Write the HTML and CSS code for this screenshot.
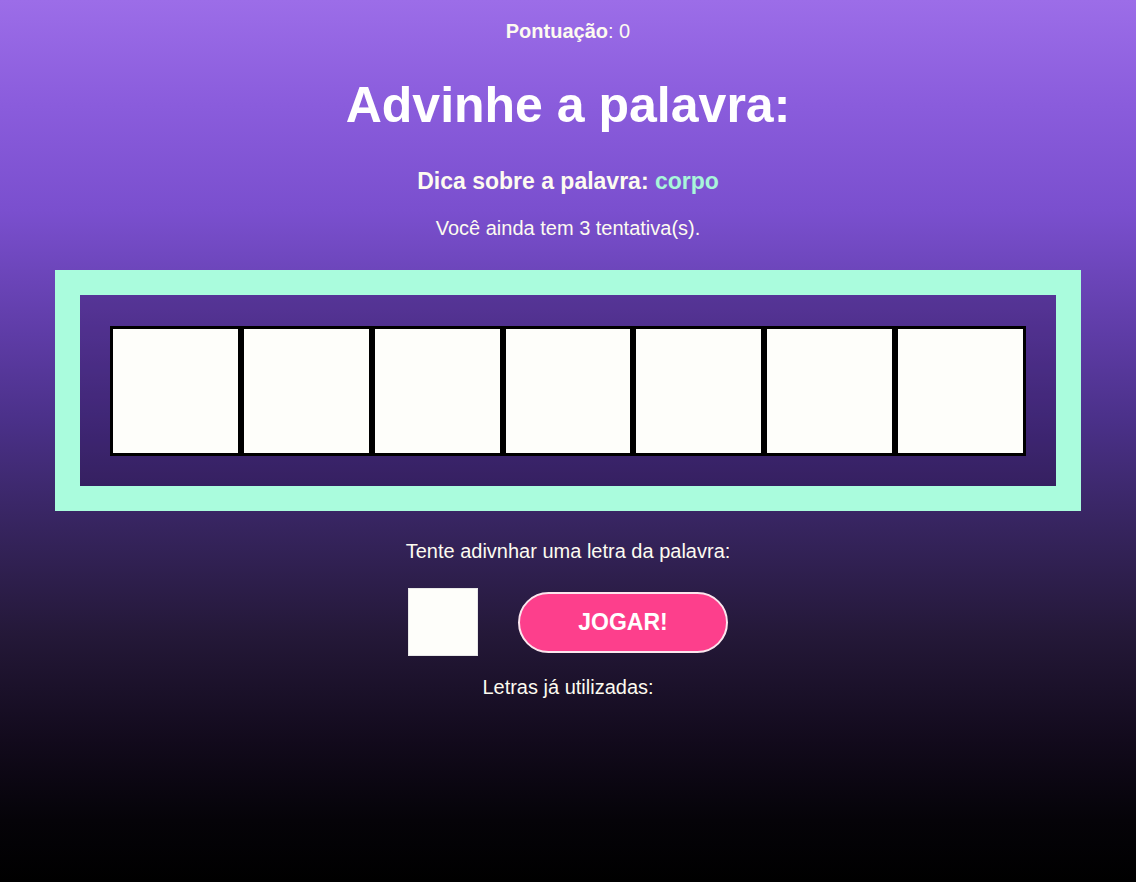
FILE: index.html
```html
<!DOCTYPE html>
<html lang="pt-BR">
<head>
<meta charset="utf-8">
<title>Advinhe a palavra</title>
<link rel="stylesheet" href="styles.css">
</head>
<body>
  <main class="game">
    <p class="score"><strong>Pontuação</strong>: 0</p>
    <h1 class="title">Advinhe a palavra:</h1>
    <h2 class="hint">Dica sobre a palavra: <span class="hint-word">corpo</span></h2>
    <p class="tries">Você ainda tem 3 tentativa(s).</p>

    <section class="board">
      <div class="board-inner">
        <div class="tiles">
          <div class="tile"></div>
          <div class="tile"></div>
          <div class="tile"></div>
          <div class="tile"></div>
          <div class="tile"></div>
          <div class="tile"></div>
          <div class="tile"></div>
        </div>
      </div>
    </section>

    <p class="prompt">Tente adivnhar uma letra da palavra:</p>
    <div class="play-row">
      <input class="letter-input" type="text" maxlength="1" aria-label="letra">
      <button class="play-btn" type="button">JOGAR!</button>
    </div>
    <p class="used">Letras já utilizadas:</p>
  </main>
</body>
</html>
```

FILE: styles.css
```css
html {
  height: 100%;
}

body {
  margin: 0;
  min-height: 100%;
  font-family: "Liberation Sans", Arial, sans-serif;
  color: #fdfbf0;
  background: linear-gradient(to bottom,
    #9c6de8 0%,
    #8a5cdc 12%,
    #7a4fce 24%,
    #5e3ca6 38%,
    #4a3088 48%,
    #36245e 60%,
    #241838 72%,
    #120a1c 84%,
    #050308 93%,
    #000000 100%);
  background-attachment: fixed;
}

.game {
  display: flex;
  flex-direction: column;
  align-items: center;
  text-align: center;
  padding-top: 19px;
}

.score {
  margin: 0;
  font-size: 20px;
  line-height: 24px;
}

.title {
  margin: 33px 0 0;
  font-size: 50px;
  line-height: 58px;
  font-weight: bold;
  color: #ffffff;
}

.hint {
  margin: 33px 0 0;
  font-size: 23px;
  line-height: 28px;
  font-weight: bold;
}

.hint-word {
  color: #a8f6da;
}

.tries {
  margin: 21px 0 0;
  font-size: 20px;
  line-height: 24px;
}

.board {
  margin-top: 30px;
  align-self: stretch;
  margin-left: 55px;
  margin-right: 55px;
  border: 25px solid #aafcdd;
}

.board-inner {
  background: rgba(20, 0, 40, 0.2);
  padding: 31px 30px 30px;
  display: flex;
}

.tiles {
  flex: 1;
  display: flex;
}

.tile {
  flex: 1;
  height: 124px;
  border: 3px solid #000;
  background: #fefefa;
}

.prompt {
  margin: 28px 0 0;
  font-size: 20px;
  line-height: 24px;
}

.play-row {
  margin-top: 25px;
  display: flex;
  align-items: center;
  gap: 40px;
}

.letter-input {
  box-sizing: border-box;
  width: 70px;
  height: 68px;
  margin: 0;
  border: 1px solid #e8e8e8;
  background: #fefefa;
  font-family: inherit;
  font-size: 32px;
  text-align: center;
  outline: none;
}

.play-btn {
  box-sizing: border-box;
  width: 210px;
  height: 61px;
  border: 2px solid #fbe6ee;
  border-radius: 31px;
  background: #fd3f8c;
  color: #ffffff;
  font-family: inherit;
  font-size: 23px;
  font-weight: bold;
  cursor: pointer;
}

.used {
  margin: 19px 0 0;
  font-size: 20px;
  line-height: 24px;
}
```
